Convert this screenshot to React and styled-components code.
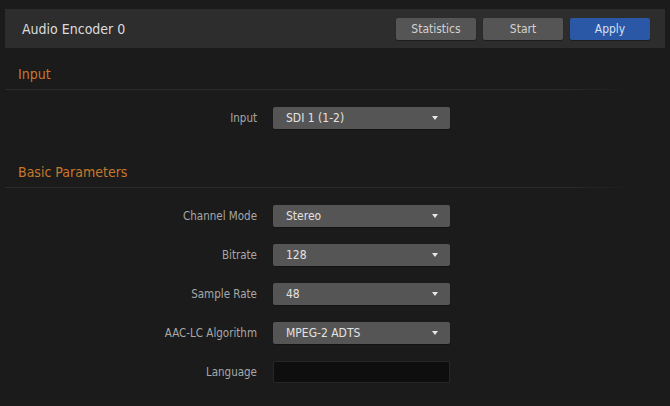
import React from 'react';
import styled, { createGlobalStyle } from 'styled-components';

const GlobalStyle = createGlobalStyle`
    html, body {
        margin: 0;
        padding: 0;
        background: #1b1b1b;
    }
    body {
        font-family: "DejaVu Sans Condensed", "DejaVu Sans", "Liberation Sans", sans-serif;
    }
`;

const Page = styled.div`
    width: 670px;
    height: 406px;
    box-sizing: border-box;
    padding: 9px 5px 0 5px;
    background: #1b1b1b;
    overflow: hidden;
`;

const TitleBar = styled.div`
    height: 39px;
    display: flex;
    align-items: center;
    justify-content: space-between;
    padding: 0 15px 0 17px;
    background: #2d2d2d;
`;

const Title = styled.span`
    font-size: 14px;
    color: #dcdcdc;
`;

const Actions = styled.div`
    display: flex;
    gap: 7px;
`;

const Button = styled.button`
    width: 80px;
    height: 22px;
    border: none;
    border-radius: 2px;
    background: ${props => props.primary ? '#2a58a6' : '#555555'};
    color: ${props => props.primary ? '#d6e0f2' : '#d2d2d2'};
    font-family: inherit;
    font-size: 12px;
    padding: 0;
    box-shadow: 0 1px 1px rgba(0, 0, 0, 0.35);
`;

const SectionTitle = styled.div`
    padding: 18px 13px 7px;
    line-height: 16px;
    font-size: 14px;
    color: #c8782a;
    position: relative;
    &::after {
        content: '';
        position: absolute;
        left: 0;
        right: 28px;
        bottom: -1px;
        height: 1px;
        background: linear-gradient(to right, #2b2b2b 88%, rgba(43, 43, 43, 0));
    }
`;

const Form = styled.div`
    display: grid;
    grid-template-columns: 252px 177px;
    column-gap: 16px;
    row-gap: 17px;
    padding: 18px 0 17px;
    align-items: center;
`;

const Label = styled.label`
    text-align: right;
    font-size: 11.5px;
    color: #a8a8a8;
`;

const Select = styled.div`
    height: 22px;
    box-sizing: border-box;
    display: flex;
    align-items: center;
    justify-content: space-between;
    padding: 0 12px 0 13px;
    background: #555555;
    border-radius: 2px;
    color: #e2e2e2;
    font-size: 12px;
    box-shadow: 0 1px 1px rgba(0, 0, 0, 0.3);
`;

const Caret = styled.span`
    width: 0;
    height: 0;
    border-left: 3px solid transparent;
    border-right: 3px solid transparent;
    border-top: 4px solid #e8e8e8;
`;

const TextInput = styled.input`
    height: 22px;
    box-sizing: border-box;
    background: #0e0e0e;
    border: 1px solid #272727;
    border-radius: 1px;
    color: #e2e2e2;
    font-family: inherit;
    font-size: 12px;
    padding: 0 8px;
    outline: none;
`;

const Field = ({ label, value }) => (
    <>
        <Label>{label}</Label>
        <Select>
            <span>{value}</span>
            <Caret />
        </Select>
    </>
);

export default () => {
    return (
        <Page>
            <GlobalStyle />
            <TitleBar>
                <Title>Audio Encoder 0</Title>
                <Actions>
                    <Button>Statistics</Button>
                    <Button>Start</Button>
                    <Button primary>Apply</Button>
                </Actions>
            </TitleBar>

            <SectionTitle>Input</SectionTitle>
            <Form>
                <Field label="Input" value="SDI 1 (1-2)" />
            </Form>

            <SectionTitle>Basic Parameters</SectionTitle>
            <Form>
                <Field label="Channel Mode" value="Stereo" />
                <Field label="Bitrate" value="128" />
                <Field label="Sample Rate" value="48" />
                <Field label="AAC-LC Algorithm" value="MPEG-2 ADTS" />
                <Label>Language</Label>
                <TextInput />
            </Form>
        </Page>
    );
};
